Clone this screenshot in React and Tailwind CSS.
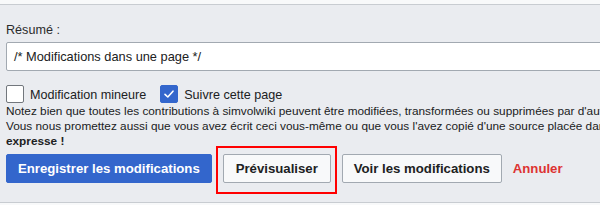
import React from "react";

function Checkbox({ checked }) {
  return checked ? (
    <span className="flex h-[18px] w-[18px] items-center justify-center rounded-[2px] border border-[#3366cc] bg-[#3366cc]">
      <svg width="12" height="12" viewBox="0 0 12 12" fill="none">
        <path d="M2 6.3 L4.8 9 L10 3.2" stroke="#fff" strokeWidth="1.6" strokeLinecap="round" strokeLinejoin="round" />
      </svg>
    </span>
  ) : (
    <span className="h-[18px] w-[18px] rounded-[2px] border border-[#72777d] bg-white" />
  );
}

export default function App() {
  return (
    <div className="h-[205px] w-[600px] overflow-hidden bg-[#f8f9fa] text-[#202122] [font-family:'Liberation_Sans',Arial,sans-serif]">
      <div className="h-[4px] bg-[#f8f9fa]" />
      <div className="h-[199px] border-y border-[#c8ccd1] bg-[#eaecf0] pl-[6px] pt-[18px]">
        <div className="h-[15px] text-[12.6px] leading-[15px] text-[#2a2b2c]">Résumé :</div>
        <div className="mt-[4px] flex h-[29px] w-[640px] items-center rounded-[2px] border border-[#a2a9b1] bg-white pl-[7px] text-[12.8px]">
          /* Modifications dans une page */
        </div>
        <div className="mt-[14px] flex h-[18px] items-center text-[12.6px] leading-[18px]">
          <Checkbox checked={false} />
          <span className="ml-[6px] pt-[2px]">Modification mineure</span>
          <span className="ml-[14px]">
            <Checkbox checked={true} />
          </span>
          <span className="ml-[6px] pt-[2px]">Suivre cette page</span>
        </div>
        <div className="mt-[1px] whitespace-nowrap text-[11.8px] leading-[15px]">
          <div>
            Notez bien que toutes les contributions à simvolwiki peuvent être modifiées, transformées ou supprimées par d'autres utilisateurs.
          </div>
          <div>
            Vous nous promettez aussi que vous avez écrit ceci vous-même ou que vous l'avez copié d'une source placée dans le domaine public ou d'une ressource libre similaire.
          </div>
          <div className="font-bold">expresse !</div>
        </div>
        <div className="mt-[5px] flex items-center text-[13.2px] font-bold">
          <button className="h-[29px] rounded-[2px] border border-[#3366cc] bg-[#3366cc] px-[11px] text-white">
            Enregistrer les modifications
          </button>
          <span className="relative ml-[11px] flex">
            <button className="h-[29px] w-[108px] rounded-[2px] border border-[#a2a9b1] bg-[#f8f9fa] text-[#202122]">
              Prévisualiser
            </button>
            <span className="pointer-events-none absolute -bottom-[11px] -left-[7px] -right-[6px] -top-[8px] border-2 border-[#ff0000]" />
          </span>
          <button className="ml-[11px] h-[29px] w-[160px] rounded-[2px] border border-[#a2a9b1] bg-[#f8f9fa] text-[#202122]">
            Voir les modifications
          </button>
          <span className="ml-[11px] text-[#d33]">Annuler</span>
        </div>
      </div>
    </div>
  );
}
